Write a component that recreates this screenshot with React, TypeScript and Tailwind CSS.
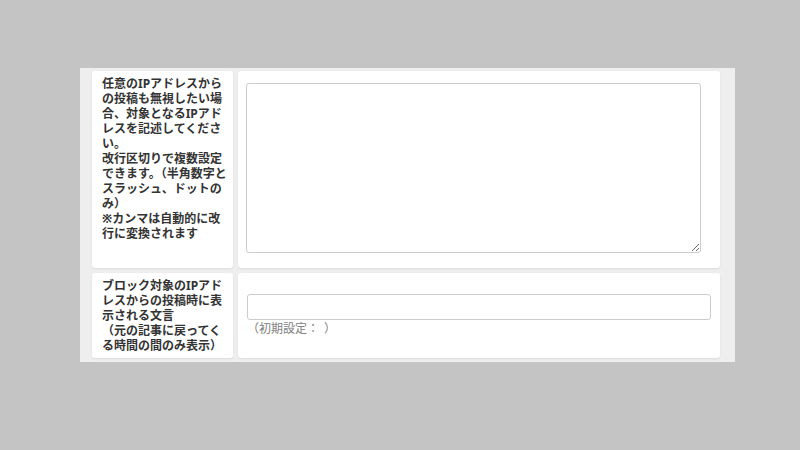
const rowOne = [
  "任意のIPアドレスから",
  "の投稿も無視したい場",
  "合、対象となるIPアド",
  "レスを記述してくださ",
  "い。",
  "改行区切りで複数設定",
  "できます。（半角数字と",
  "スラッシュ、ドットの",
  "み）",
  "※カンマは自動的に改",
  "行に変換されます",
];

const rowTwo = [
  "ブロック対象のIPアド",
  "レスからの投稿時に表",
  "示される文言",
  "（元の記事に戻ってく",
  "る時間の間のみ表示）",
];

function Label({ lines }: { lines: string[] }) {
  return (
    <div className="bg-white rounded-[3px] shadow-[0_1px_2px_rgba(0,0,0,0.08)] px-[10px] py-[5px] text-[12px] leading-[15px] font-bold text-[#333] whitespace-nowrap">
      {lines.map((l, i) => (
        <div key={i} className="[text-spacing-trim:trim-both]">
          {l}
        </div>
      ))}
    </div>
  );
}

export default function App() {
  return (
    <div
      className="w-[800px] h-[450px] bg-[#c4c4c4] pt-[68px] pl-[80px]"
      style={{ fontFamily: '"Noto Sans", "Noto Sans CJK JP", sans-serif' }}
    >
      <div className="w-[655px] h-[294px] bg-[#eeeeee] overflow-hidden pt-[3px] pl-[12px]">
        <div className="grid grid-cols-[141px_482px] gap-[5px]">
          <Label lines={rowOne} />
          <div className="bg-white rounded-[3px] shadow-[0_1px_2px_rgba(0,0,0,0.08)] px-[8px] pt-[12px] pb-[15px]">
            <textarea className="block w-[455px] h-[170px] border border-[#cccccc] rounded-[3px] bg-white outline-none" />
          </div>

          <Label lines={rowTwo} />
          <div className="bg-white rounded-[3px] shadow-[0_1px_2px_rgba(0,0,0,0.08)] px-[9px] flex flex-col justify-center">
            <input
              type="text"
              className="block w-[464px] h-[26px] border border-[#cccccc] rounded-[3px] bg-white outline-none"
            />
            <div className="flex gap-[5px] text-[12px] leading-[16px] text-[#808080] mt-[1px]">
              <span>（初期設定：</span>
              <span>）</span>
            </div>
          </div>

          <div className="bg-white rounded-[3px] h-[40px]" />
          <div className="bg-white rounded-[3px] h-[40px]" />
        </div>
      </div>
    </div>
  );
}
